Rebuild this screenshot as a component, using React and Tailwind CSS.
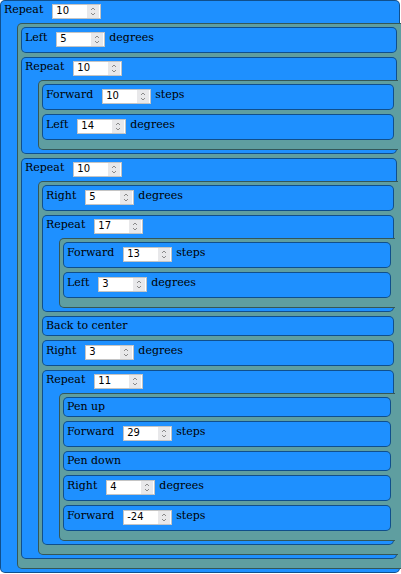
import React from "react";

const program = {
  type: "repeat",
  n: 10,
  body: [
    { type: "left", v: 5 },
    {
      type: "repeat",
      n: 10,
      body: [
        { type: "forward", v: 10 },
        { type: "left", v: 14 },
      ],
    },
    {
      type: "repeat",
      n: 10,
      body: [
        { type: "right", v: 5 },
        {
          type: "repeat",
          n: 17,
          body: [
            { type: "forward", v: 13 },
            { type: "left", v: 3 },
          ],
        },
        { type: "back" },
        { type: "right", v: 3 },
        {
          type: "repeat",
          n: 11,
          body: [
            { type: "penup" },
            { type: "forward", v: 29 },
            { type: "pendown" },
            { type: "right", v: 4 },
            { type: "forward", v: -24 },
          ],
        },
      ],
    },
  ],
};

const labels = {
  left: ["Left", "degrees"],
  right: ["Right", "degrees"],
  forward: ["Forward", "steps"],
  back: ["Back to center"],
  penup: ["Pen up"],
  pendown: ["Pen down"],
};

function NumberBox({ value }) {
  return (
    <span className="relative ml-[9px] block h-[15px] w-[49px] shrink-0">
      <input
        type="text"
        defaultValue={value}
        className="block h-[15px] w-[49px] border border-[#c4c4c4] bg-white pb-[2px] pl-[3px] pr-[14px] font-['DejaVu_Sans',sans-serif] text-[10px] text-black outline-none"
      />
      {/* spinner */}
      <span className="pointer-events-none absolute top-[1px] right-[2px] bottom-[1px] w-[12px] bg-[#e8e8ea]">
        <svg width="12" height="13" viewBox="0 0 12 13" className="block">
          <path d="M4 5 L6 3 L8 5" fill="none" stroke="#8a8a8a" strokeWidth="1" />
          <path d="M4 8 L6 10 L8 8" fill="none" stroke="#8a8a8a" strokeWidth="1" />
        </svg>
      </span>
    </span>
  );
}

function Statement({ item }) {
  if (item.type === "repeat") {
    return (
      <div className="rounded-[5px] border border-black/45 bg-[#1e90ff] pb-[3px]">
        <div className="flex h-[22px] items-start pt-[3px] pl-[3px]">
          <span className="leading-[12px]">Repeat</span>
          <NumberBox value={item.n} />
        </div>
        <div className="-mr-[2px] ml-[16px] flex flex-col gap-[4px] rounded-l-[5px] border-y border-l border-black/45 bg-[#5f9ea0] pt-[3px] pr-[4px] pb-[9px] pl-[3px]">
          {item.body.map((child, i) => (
            <Statement key={i} item={child} />
          ))}
        </div>
      </div>
    );
  }

  const [name, unit] = labels[item.type];

  if (item.v === undefined) {
    return (
      <div className="rounded-[5px] border border-black/45 bg-[#1e90ff] pt-[3px] pb-[3px] pl-[3px] leading-[12px]">
        {name}
      </div>
    );
  }

  return (
    <div className="rounded-[5px] border border-black/45 bg-[#1e90ff] pt-[4px] pb-[5px] pl-[3px]">
      <div className="flex h-[15px] items-start">
        <span className="leading-[12px]">{name}</span>
        <NumberBox value={item.v} />
        <span className="ml-[4px] leading-[12px]">{unit}</span>
      </div>
    </div>
  );
}

export default function App() {
  return (
    <div className="w-[401px] overflow-hidden font-['DejaVu_Serif',serif] text-[11px] text-black">
      <div className="w-[400px]">
        <Statement item={program} />
      </div>
    </div>
  );
}
